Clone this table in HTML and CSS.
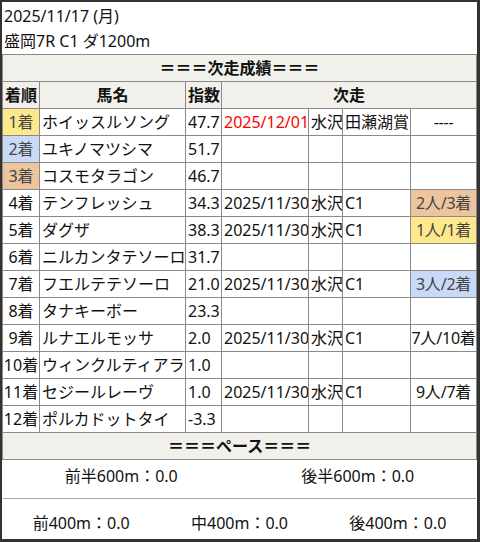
FILE: index.html
```html
<!DOCTYPE html>
<html lang="ja">
<head>
<meta charset="utf-8">
<link rel="stylesheet" href="styles.css">
</head>
<body>
<div class="frame">
  <div class="info">
    <div>2025/11/17 (月)</div>
    <div>盛岡7R C1 ダ1200m</div>
  </div>
  <table class="results">
    <colgroup>
      <col class="c-rank"><col class="c-name"><col class="c-idx"><col class="c-date"><col class="c-place"><col class="c-race"><col class="c-res">
    </colgroup>
    <tr class="section"><th colspan="7">＝＝＝次走成績＝＝＝</th></tr>
    <tr class="head"><th>着順</th><th>馬名</th><th>指数</th><th colspan="4">次走</th></tr>
    <tr><td class="rank gold">1着</td><td>ホイッスルソング</td><td>47.7</td><td class="red">2025/12/01</td><td>水沢</td><td>田瀬湖賞</td><td class="res">----</td></tr>
    <tr><td class="rank silver">2着</td><td>ユキノマツシマ</td><td>51.7</td><td></td><td></td><td></td><td></td></tr>
    <tr><td class="rank bronze">3着</td><td>コスモタラゴン</td><td>46.7</td><td></td><td></td><td></td><td></td></tr>
    <tr><td class="rank">4着</td><td>テンフレッシュ</td><td>34.3</td><td>2025/11/30</td><td>水沢</td><td>C1</td><td class="res bronze">2人/3着</td></tr>
    <tr><td class="rank">5着</td><td>ダグザ</td><td>38.3</td><td>2025/11/30</td><td>水沢</td><td>C1</td><td class="res gold">1人/1着</td></tr>
    <tr><td class="rank">6着</td><td>ニルカンタテソーロ</td><td>31.7</td><td></td><td></td><td></td><td></td></tr>
    <tr><td class="rank">7着</td><td>フエルテテソーロ</td><td>21.0</td><td>2025/11/30</td><td>水沢</td><td>C1</td><td class="res silver">3人/2着</td></tr>
    <tr><td class="rank">8着</td><td>タナキーボー</td><td>23.3</td><td></td><td></td><td></td><td></td></tr>
    <tr><td class="rank">9着</td><td>ルナエルモッサ</td><td>2.0</td><td>2025/11/30</td><td>水沢</td><td>C1</td><td class="res">7人/10着</td></tr>
    <tr><td class="rank">10着</td><td>ウィンクルティアラ</td><td>1.0</td><td></td><td></td><td></td><td></td></tr>
    <tr><td class="rank">11着</td><td>セジールレーヴ</td><td>1.0</td><td>2025/11/30</td><td>水沢</td><td>C1</td><td class="res">9人/7着</td></tr>
    <tr><td class="rank">12着</td><td>ポルカドットタイ</td><td>-3.3</td><td></td><td></td><td></td><td></td></tr>
    <tr class="section"><th colspan="7">＝＝＝ペース＝＝＝</th></tr>
  </table>
  <div class="pace pace-half">
    <div>前半600m：0.0</div>
    <div>後半600m：0.0</div>
  </div>
  <div class="pace pace-third">
    <div>前400m：0.0</div>
    <div>中400m：0.0</div>
    <div>後400m：0.0</div>
  </div>
</div>
</body>
</html>
```

FILE: styles.css
```css
html, body {
  margin: 0;
  padding: 0;
  background: #fff;
}
body {
  font-family: "Noto Sans", "Noto Sans CJK JP", sans-serif;
  font-size: 16px;
  color: #111;
}
.frame {
  width: 480px;
  height: 542px;
  box-sizing: border-box;
  border-style: solid;
  border-color: #333;
  border-width: 2px 3px 3px 2px;
  display: flex;
  flex-direction: column;
  overflow: hidden;
}
.info {
  padding: 2px 2px 0;
  line-height: 25px;
  height: 50px;
}
.results {
  width: 475px;
  border-collapse: collapse;
  table-layout: fixed;
}
.results td, .results th {
  border: 1px solid #8a8a8a;
  padding: 1px 2px;
  line-height: 24px;
  white-space: nowrap;
  overflow: hidden;
  text-align: left;
  font-weight: normal;
}
.results th {
  font-weight: bold;
  text-align: center;
  background: #f2f0eb;
}
.c-rank { width: 37px; }
.c-name { width: 146px; }
.c-idx { width: 36px; }
.c-date { width: 87px; }
.c-place { width: 34px; }
.c-race { width: 68px; }
.c-res { width: 66px; }
.results td.rank {
  text-align: center;
  padding: 1px 0;
}
.results td.res {
  text-align: center;
  padding: 1px 0;
  overflow: visible;
  letter-spacing: -0.2px;
}
.red { color: #f00; }
.gold { background: #fde98c; color: #444; }
.silver { background: #c9daf8; color: #444; }
.bronze { background: #ecc59f; color: #444; }
.pace {
  display: flex;
  line-height: 24px;
}
.pace > div {
  flex: 1;
  text-align: center;
}
.pace-half {
  height: 39px;
  box-sizing: border-box;
  padding-top: 4px;
  border-bottom: 1px solid #a8a8a8;
  margin: 0 1px;
}
.pace-third {
  padding-top: 12px;
}
```
